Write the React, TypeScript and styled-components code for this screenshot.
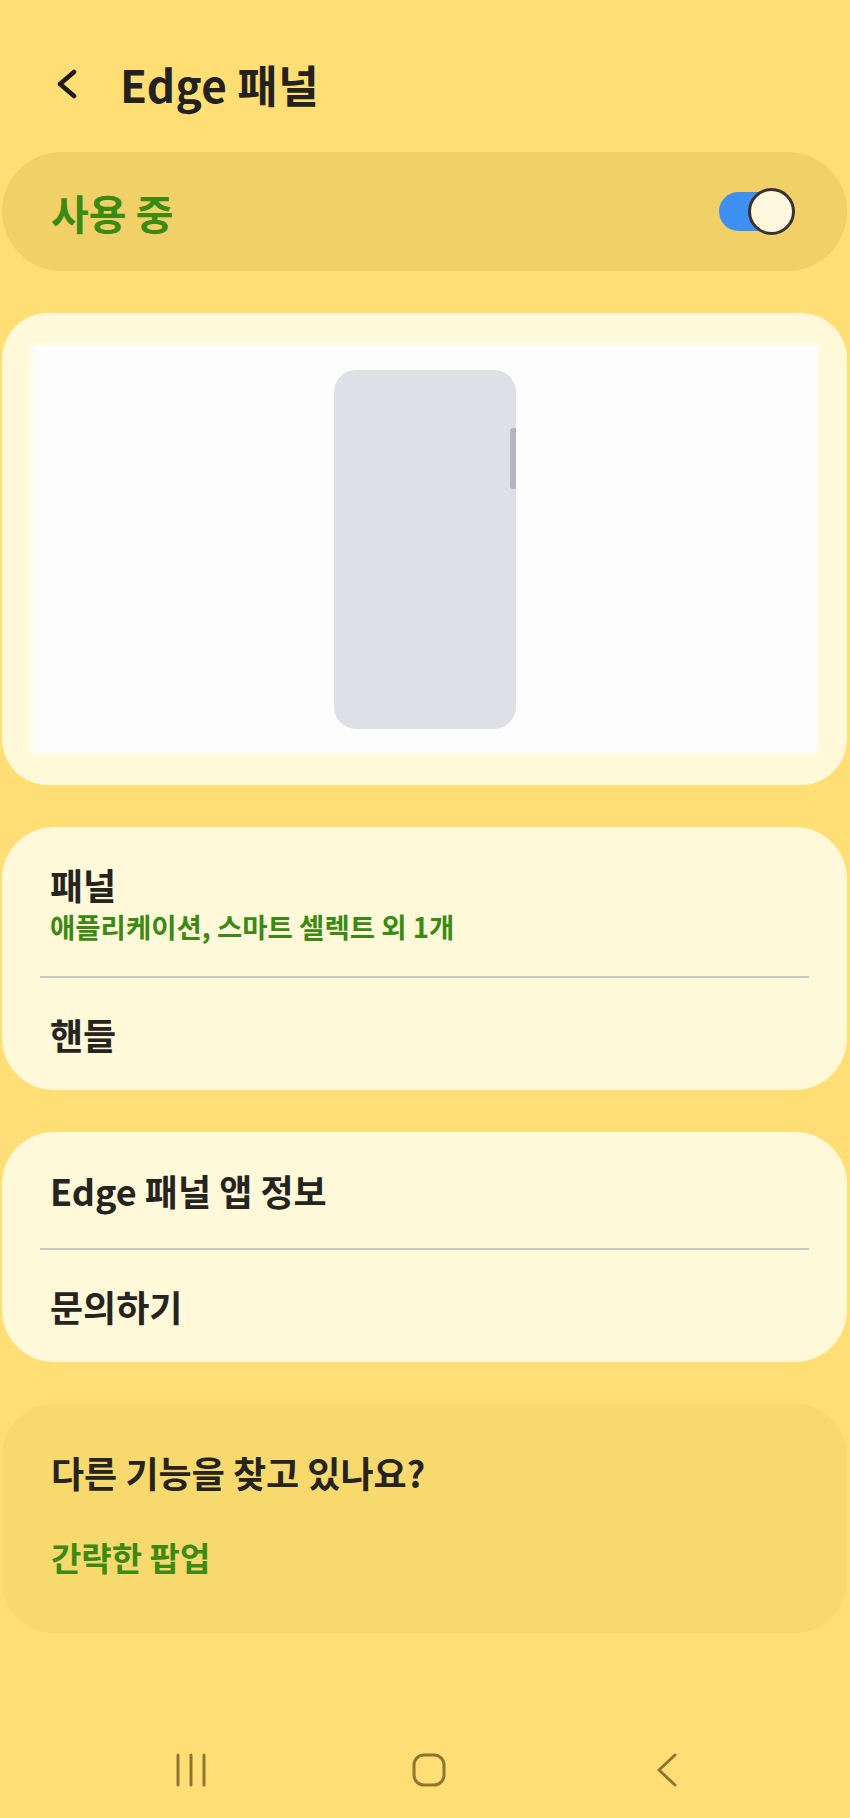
import React from "react";
import styled, { createGlobalStyle } from "styled-components";

const GlobalStyle = createGlobalStyle`
  html, body {
    margin: 0;
    padding: 0;
    background: #ffdf75;
  }
  body {
    font-family: "Noto Sans CJK KR", "Noto Sans", sans-serif;
    -webkit-font-smoothing: antialiased;
  }
  * { box-sizing: border-box; }
`;

const Page = styled.div`
  width: 850px;
  min-height: 1818px;
  background: #ffdf75;
  display: flex;
  flex-direction: column;
  padding: 0 3px 0 2px;
`;

const Header = styled.header`
  height: 152px;
  display: flex;
  align-items: center;
  padding: 16px 0 0 52px;
`;

const BackButton = styled.button`
  width: 26px;
  height: 34px;
  border: none;
  background: none;
  padding: 0;
  margin-right: 40px;
  display: flex;
  align-items: center;
  justify-content: center;
`;

const Title = styled.h1`
  margin: 0;
  font-size: 44px;
  line-height: 54px;
  font-weight: 700;
  color: #24221e;
  letter-spacing: 0.3px;
`;

const Card = styled.section<{ $bg?: string; $radius?: number }>`
  background: ${(p) => p.$bg ?? "#fff9da"};
  border-radius: ${(p) => p.$radius ?? 52}px;
  overflow: hidden;
`;

const Stack = styled.div`
  display: flex;
  flex-direction: column;
  gap: 42px;
`;

const SwitchCard = styled(Card)`
  height: 119px;
  display: flex;
  align-items: center;
  justify-content: space-between;
  padding: 0 52px 0 49px;
  border-radius: 60px;
`;

const SwitchLabel = styled.span`
  font-size: 41px;
  font-weight: 700;
  color: #3a8a14;
  line-height: 50px;
`;

const Toggle = styled.div`
  position: relative;
  width: 76px;
  height: 47px;
`;

const Track = styled.div`
  position: absolute;
  left: 0;
  top: 4px;
  width: 58px;
  height: 39px;
  border-radius: 20px;
  background: #3f8ef1;
`;

const Thumb = styled.div`
  position: absolute;
  right: 0;
  top: 0;
  width: 47px;
  height: 47px;
  border-radius: 50%;
  background: #fff8df;
  border: 3px solid #38332c;
`;

const PreviewCard = styled(Card)`
  height: 472px;
  padding: 33px 30px 33px 31px;
  border-radius: 46px;
`;

const PreviewArea = styled.div`
  height: 100%;
  background: #fdfdfd;
  box-shadow: 0 0 6px 2px rgba(255, 255, 255, 0.6);
  display: flex;
  align-items: center;
  justify-content: center;
`;

const Phone = styled.div`
  position: relative;
  width: 182px;
  height: 359px;
  border-radius: 22px;
  background: #dfe0e6;
`;

const EdgeHandle = styled.div`
  position: absolute;
  right: 0;
  top: 58px;
  width: 6px;
  height: 61px;
  border-radius: 3px 0 0 3px;
  background: #b5b6bc;
`;

const Row = styled.div<{ $h: number }>`
  height: ${(p) => p.$h}px;
  display: flex;
  flex-direction: column;
  justify-content: center;
  padding: 0 48px;
`;

const RowTitle = styled.div`
  font-size: 36px;
  line-height: 46px;
  font-weight: 700;
  color: #26241f;
`;

const RowSub = styled.div`
  font-size: 27.5px;
  line-height: 34px;
  font-weight: 700;
  color: #3a8a14;
  margin-top: 2px;
`;

const Divider = styled.hr`
  margin: 0 38px;
  border: none;
  height: 2px;
  background: #cdc9bd;
`;

const SuggestCard = styled(Card)`
  height: 229px;
  padding: 45px 48px 0 49px;
  border-radius: 52px;
`;

const SuggestTitle = styled.div`
  font-size: 36px;
  line-height: 46px;
  font-weight: 700;
  color: #26241f;
`;

const SuggestLink = styled.div`
  margin-top: 40px;
  font-size: 33px;
  line-height: 44px;
  font-weight: 700;
  color: #3a8a14;
`;

const NavBar = styled.nav`
  margin-top: auto;
  height: 96px;
  display: grid;
  grid-template-columns: repeat(3, 238px);
  padding-left: 70px;
  align-items: center;
`;

const NavSlot = styled.div`
  display: flex;
  justify-content: center;
  align-items: center;
  height: 34px;
`;

const navColor = "#8f7531";

export default function App() {
  return (
    <>
      <GlobalStyle />
      <Page>
        <Header>
          <BackButton aria-label="뒤로">
            <svg width="24" height="30" viewBox="0 0 24 30">
              <path
                d="M19 3 L5 15 L19 27"
                fill="none"
                stroke="#1f1d1a"
                strokeWidth="4.6"
                strokeLinecap="round"
                strokeLinejoin="round"
              />
            </svg>
          </BackButton>
          <Title>Edge 패널</Title>
        </Header>

        <Stack>
          <SwitchCard $bg="#f1d068">
            <SwitchLabel>사용 중</SwitchLabel>
            <Toggle role="switch" aria-checked="true">
              <Track />
              <Thumb />
            </Toggle>
          </SwitchCard>

          <PreviewCard>
            <PreviewArea>
              <Phone>
                <EdgeHandle />
              </Phone>
            </PreviewArea>
          </PreviewCard>

          <Card>
            <Row $h={149}>
              <RowTitle>패널</RowTitle>
              <RowSub>애플리케이션, 스마트 셀렉트 외 1개</RowSub>
            </Row>
            <Divider />
            <Row $h={112}>
              <RowTitle>핸들</RowTitle>
            </Row>
          </Card>

          <Card>
            <Row $h={116}>
              <RowTitle>Edge 패널 앱 정보</RowTitle>
            </Row>
            <Divider />
            <Row $h={112}>
              <RowTitle>문의하기</RowTitle>
            </Row>
          </Card>

          <SuggestCard $bg="#f8d96d">
            <SuggestTitle>다른 기능을 찾고 있나요?</SuggestTitle>
            <SuggestLink>간략한 팝업</SuggestLink>
          </SuggestCard>
        </Stack>

        <NavBar>
          <NavSlot>
            <svg width="32" height="34" viewBox="0 0 32 34">
              <g stroke={navColor} strokeWidth="3" strokeLinecap="round">
                <line x1="3" y1="2" x2="3" y2="32" />
                <line x1="16" y1="2" x2="16" y2="32" />
                <line x1="29" y1="2" x2="29" y2="32" />
              </g>
            </svg>
          </NavSlot>
          <NavSlot>
            <svg width="34" height="34" viewBox="0 0 34 34">
              <rect
                x="2"
                y="2"
                width="30"
                height="30"
                rx="10"
                fill="none"
                stroke={navColor}
                strokeWidth="3"
              />
            </svg>
          </NavSlot>
          <NavSlot>
            <svg width="22" height="34" viewBox="0 0 22 34">
              <path
                d="M19 2 L3 17 L19 32"
                fill="none"
                stroke={navColor}
                strokeWidth="3"
                strokeLinecap="round"
                strokeLinejoin="round"
              />
            </svg>
          </NavSlot>
        </NavBar>
      </Page>
    </>
  );
}
